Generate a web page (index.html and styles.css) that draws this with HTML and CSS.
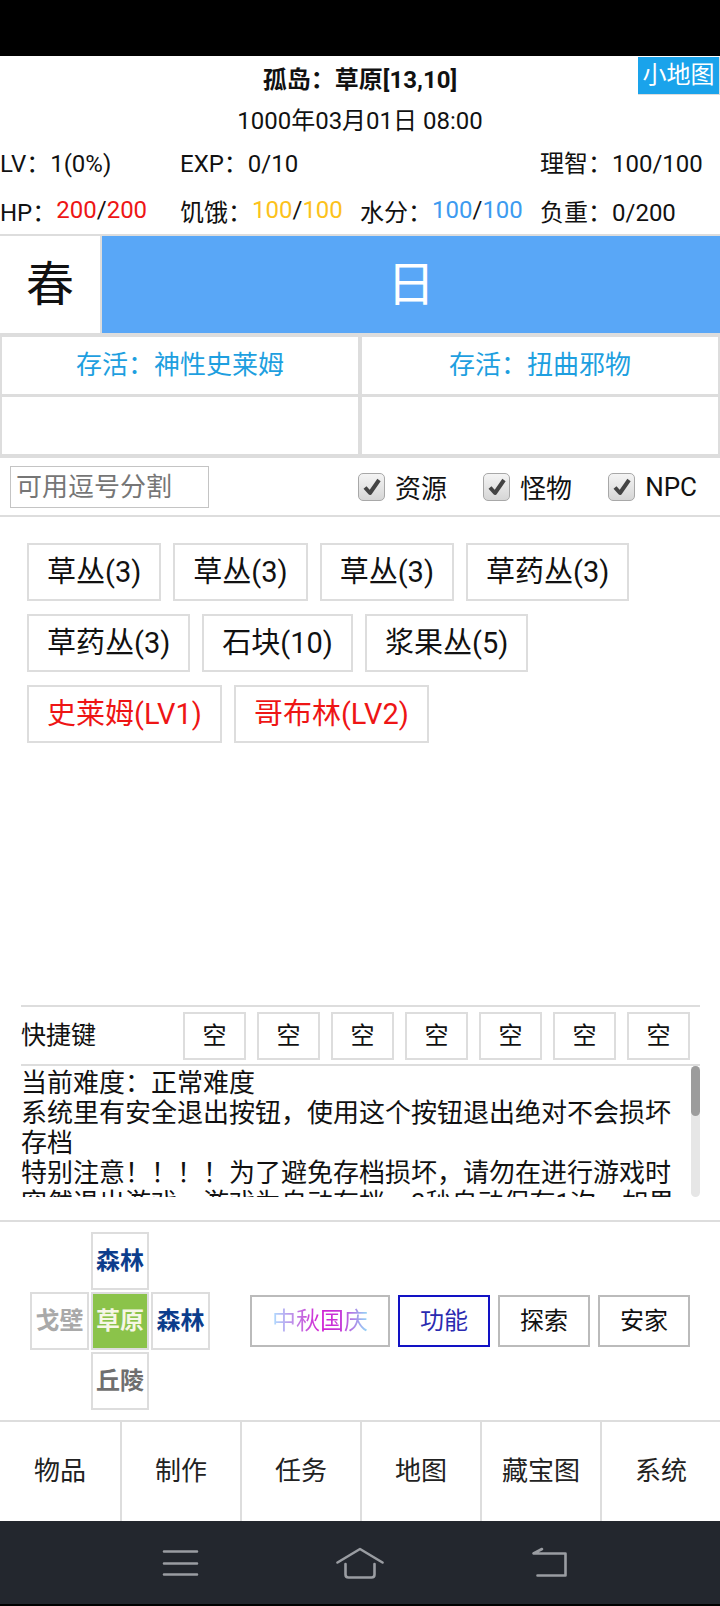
FILE: index.html
```html
<!DOCTYPE html>
<html>
<head>
    <meta charset="utf-8">
    <title>孤岛</title>
    <link rel="stylesheet" href="styles.css">
</head>
<body>
    <div class="statusbar"></div>
    <div class="header">
        <div class="title-row">
            <div></div>
            <div class="title">孤岛：草原[13,10]</div>
            <div class="minimap-btn">小地图</div>
        </div>
        <div class="date">1000年03月01日 08:00</div>
        <div class="stats">
            <div>LV：1(0%)</div>
            <div>EXP：0/10</div>
            <div></div>
            <div>理智：100/100</div>
            <div>HP：<span class="red">200</span>/<span class="red">200</span></div>
            <div>饥饿：<span class="yellow">100</span>/<span class="yellow">100</span></div>
            <div>水分：<span class="blue">100</span>/<span class="blue">100</span></div>
            <div>负重：0/200</div>
        </div>
    </div>
    <div class="season">
        <div class="season-name">春</div>
        <div class="day-phase">日</div>
    </div>
    <div class="board">
        <div class="board-cell survive">存活：神性史莱姆</div>
        <div class="board-cell survive">存活：扭曲邪物</div>
        <div class="board-cell"></div>
        <div class="board-cell"></div>
    </div>
    <div class="filter">
        <input class="filter-input" type="text" placeholder="可用逗号分割">
        <label class="check first">
            <span class="check-box"><svg width="20" height="20" viewBox="0 0 20 20"><path d="M3 10.5 L8 16 L17 3" fill="none" stroke="#444" stroke-width="4" stroke-linejoin="round"/></svg></span>资源
        </label>
        <label class="check">
            <span class="check-box"><svg width="20" height="20" viewBox="0 0 20 20"><path d="M3 10.5 L8 16 L17 3" fill="none" stroke="#444" stroke-width="4" stroke-linejoin="round"/></svg></span>怪物
        </label>
        <label class="check">
            <span class="check-box"><svg width="20" height="20" viewBox="0 0 20 20"><path d="M3 10.5 L8 16 L17 3" fill="none" stroke="#444" stroke-width="4" stroke-linejoin="round"/></svg></span>NPC
        </label>
    </div>
    <div class="items">
        <div class="item">草丛(3)</div>
        <div class="item">草丛(3)</div>
        <div class="item">草丛(3)</div>
        <div class="item">草药丛(3)</div>
        <div class="item">草药丛(3)</div>
        <div class="item">石块(10)</div>
        <div class="item">浆果丛(5)</div>
        <div class="item monster">史莱姆(LV1)</div>
        <div class="item monster">哥布林(LV2)</div>
    </div>
    <div class="shortcut">
        <div class="shortcut-label">快捷键</div>
        <div class="shortcut-keys">
            <div class="key">空</div>
            <div class="key">空</div>
            <div class="key">空</div>
            <div class="key">空</div>
            <div class="key">空</div>
            <div class="key">空</div>
            <div class="key">空</div>
        </div>
    </div>
    <div class="log">
        <div class="log-text">
            <div>当前难度：正常难度</div>
            <div>系统里有安全退出按钮，使用这个按钮退出绝对不会损坏存档</div>
            <div>特别注意！！！！为了避免存档损坏，请勿在进行游戏时突然退出游戏，游戏为自动存档，3秒自动保存1次，如果在存档时强行退出可能会导致存档损坏。</div>
        </div>
        <div class="log-scroll"><div class="log-thumb"></div></div>
    </div>
    <div class="control">
        <div class="cross">
            <div></div>
            <div class="dir forest">森林</div>
            <div></div>
            <div class="dir desert">戈壁</div>
            <div class="dir here">草原</div>
            <div class="dir forest">森林</div>
            <div></div>
            <div class="dir hills">丘陵</div>
            <div></div>
        </div>
        <div class="actions">
            <div class="action festival"><span>中秋国庆</span></div>
            <div class="action active">功能</div>
            <div class="action">探索</div>
            <div class="action">安家</div>
        </div>
    </div>
    <div class="tabbar">
        <div class="tab">物品</div>
        <div class="tab">制作</div>
        <div class="tab">任务</div>
        <div class="tab">地图</div>
        <div class="tab">藏宝图</div>
        <div class="tab">系统</div>
    </div>
    <div class="navbar">
        <svg class="nav-menu" width="48" height="40" viewBox="0 0 48 40">
            <path d="M8 8.5 H41 M8 20.5 H41 M8 31.5 H41" stroke="#9a9da2" stroke-width="2.6" stroke-linecap="round"/>
        </svg>
        <svg class="nav-home" width="48" height="40" viewBox="0 0 48 40">
            <path d="M1.5 19.5 L24 6 L46.5 19.5" fill="none" stroke="#9a9da2" stroke-width="2.6" stroke-linecap="round" stroke-linejoin="round"/>
            <path d="M9.5 21 V31.5 Q9.5 34.5 12.5 34.5 H35.5 Q38.5 34.5 38.5 31.5 V21" fill="none" stroke="#9a9da2" stroke-width="2.6" stroke-linecap="round"/>
        </svg>
        <svg class="nav-back" width="48" height="40" viewBox="0 0 48 40">
            <path d="M16 6 L7.5 10.5 H39.5 V32.5 H11.5" fill="none" stroke="#9a9da2" stroke-width="2.6" stroke-linecap="round" stroke-linejoin="round"/>
        </svg>
    </div>
</body>
</html>
```

FILE: styles.css
```css
body {
    font-family: Roboto, "Noto Sans CJK SC", sans-serif;
    background-color: #fff;
    color: #111;
    margin: 0;
    padding: 0;
    width: 720px;
}
.statusbar {
    height: 56px;
    background-color: #000;
}
.header {
    height: 178px;
}
.title-row {
    display: grid;
    grid-template-columns: 1fr auto 1fr;
    height: 49px;
}
.title {
    font-size: 24px;
    font-weight: bold;
    line-height: 49px;
}
.minimap-btn {
    justify-self: end;
    align-self: start;
    margin-top: 1px;
    height: 38px;
    width: 82px;
    box-sizing: border-box;
    background-color: #1aa3eb;
    border-right: 1px solid #ddd;
    border-bottom: 1px solid #ddd;
    color: #fff;
    font-size: 24px;
    line-height: 37px;
    text-align: center;
}
.date {
    font-size: 24px;
    line-height: 32px;
    text-align: center;
}
.stats {
    display: grid;
    grid-template-columns: repeat(4, 180px);
    grid-template-rows: 49px 48px;
    font-size: 24px;
    white-space: nowrap;
}
.stats div {
    display: flex;
    align-items: center;
}
.red {
    color: #ee1515;
}
.yellow {
    color: #fcc21b;
}
.blue {
    color: #3d9bf0;
}
.season {
    display: flex;
    gap: 2px;
    height: 97px;
    border-top: 2px solid #ddd;
    background-color: #ddd;
}
.season-name {
    width: 100px;
    background-color: #fff;
    font-size: 48px;
    line-height: 97px;
    text-align: center;
}
.day-phase {
    flex: 1;
    background-color: #59a7f7;
    color: #fff;
    font-size: 48px;
    line-height: 97px;
    text-align: center;
}
.board {
    display: grid;
    grid-template-columns: 1fr 1fr;
    grid-auto-rows: 57px;
    gap: 3px 4px;
    padding: 4px 2px;
    background-color: #ddd;
}
.board-cell {
    background-color: #fff;
    font-size: 26px;
    line-height: 57px;
    text-align: center;
}
.survive {
    color: #1e9fe0;
}
.filter {
    display: flex;
    align-items: center;
    height: 57px;
    padding: 0 23px 0 10px;
    border-bottom: 2px solid #ddd;
}
.filter-input {
    width: 199px;
    height: 42px;
    box-sizing: border-box;
    border: 1px solid #c4c4c4;
    padding: 0 5px;
    margin: 0;
    font-family: Roboto, "Noto Sans CJK SC", sans-serif;
    font-size: 26px;
    color: #333;
    outline: none;
}
.filter-input::placeholder {
    color: #767676;
}
.check {
    display: flex;
    align-items: center;
    margin-left: 36px;
    font-size: 26px;
}
.check.first {
    margin-left: auto;
}
.check-box {
    display: flex;
    align-items: center;
    justify-content: center;
    width: 27px;
    height: 28px;
    box-sizing: border-box;
    margin-right: 10px;
    border: 1px solid #a8a8a8;
    border-radius: 5px;
    background: linear-gradient(#f4f4f4, #d6d6d6);
}
.items {
    display: flex;
    flex-wrap: wrap;
    align-content: flex-start;
    gap: 13px 12px;
    height: 488px;
    box-sizing: border-box;
    padding: 26px 20px 0 27px;
}
.item {
    height: 58px;
    box-sizing: border-box;
    padding: 0 18px;
    border: 2px solid #ddd;
    font-size: 29px;
    line-height: 54px;
    white-space: nowrap;
}
.monster {
    color: #ee1515;
}
.shortcut {
    display: flex;
    align-items: center;
    height: 57px;
    margin: 0 20px 0 21px;
    border-top: 2px solid #ddd;
    border-bottom: 2px solid #ddd;
}
.shortcut-label {
    width: 162px;
    margin-bottom: 6px;
    font-size: 25px;
}
.shortcut-keys {
    display: flex;
    gap: 11px;
    margin-top: 1px;
}
.key {
    width: 63px;
    height: 48px;
    box-sizing: border-box;
    border: 2px solid #ddd;
    font-size: 24px;
    line-height: 44px;
    text-align: center;
}
.log {
    display: flex;
    height: 131px;
    margin: 0 20px 23px 21px;
}
.log-text {
    flex: 1;
    overflow: hidden;
    padding-top: 2px;
    font-size: 26px;
    line-height: 30px;
}
.log-scroll {
    width: 9px;
    background-color: #e6e6e6;
    border-radius: 5px;
}
.log-thumb {
    height: 50px;
    background-color: #9c9c9c;
    border-radius: 5px;
}
.control {
    display: flex;
    align-items: center;
    height: 198px;
    padding-left: 30px;
    border-top: 2px solid #ddd;
}
.cross {
    display: grid;
    grid-template-columns: 59px 58px 59px;
    grid-template-rows: 58px 58px 58px;
    gap: 2px;
}
.dir {
    box-sizing: border-box;
    border: 2px solid #ddd;
    font-size: 24px;
    font-weight: bold;
    line-height: 54px;
    text-align: center;
    white-space: nowrap;
}
.forest {
    color: #0c3d8c;
}
.desert {
    color: #a9a9a9;
}
.hills {
    color: #6f6f6f;
}
.here {
    background-color: #8bc34a;
    color: #f6f6e6;
}
.actions {
    display: flex;
    gap: 8px;
    margin-left: 40px;
}
.action {
    height: 52px;
    box-sizing: border-box;
    padding: 0 20px;
    border: 2px solid #bbb;
    font-size: 24px;
    line-height: 48px;
    white-space: nowrap;
}
.action.active {
    border-color: #1212c4;
    color: #2a2ab0;
}
.festival span {
    background: linear-gradient(90deg, #aee0ff, #c46ee0 30%, #d21ed4 50%, #c43ad8 72%, #92dcf8);
    -webkit-background-clip: text;
    background-clip: text;
    color: transparent;
}
.tabbar {
    display: flex;
    height: 99px;
    border-top: 2px solid #ddd;
}
.tab {
    width: 120px;
    box-sizing: border-box;
    font-size: 26px;
    line-height: 99px;
    text-align: center;
    color: #222;
}
.tab + .tab {
    border-left: 2px solid #ddd;
}
.navbar {
    display: flex;
    align-items: center;
    height: 85px;
    padding-left: 156px;
    background-color: #23272e;
    border-bottom: 2px solid #000;
    box-sizing: border-box;
}
.nav-home {
    margin-left: 132px;
}
.nav-back {
    margin-left: 142px;
}
```
